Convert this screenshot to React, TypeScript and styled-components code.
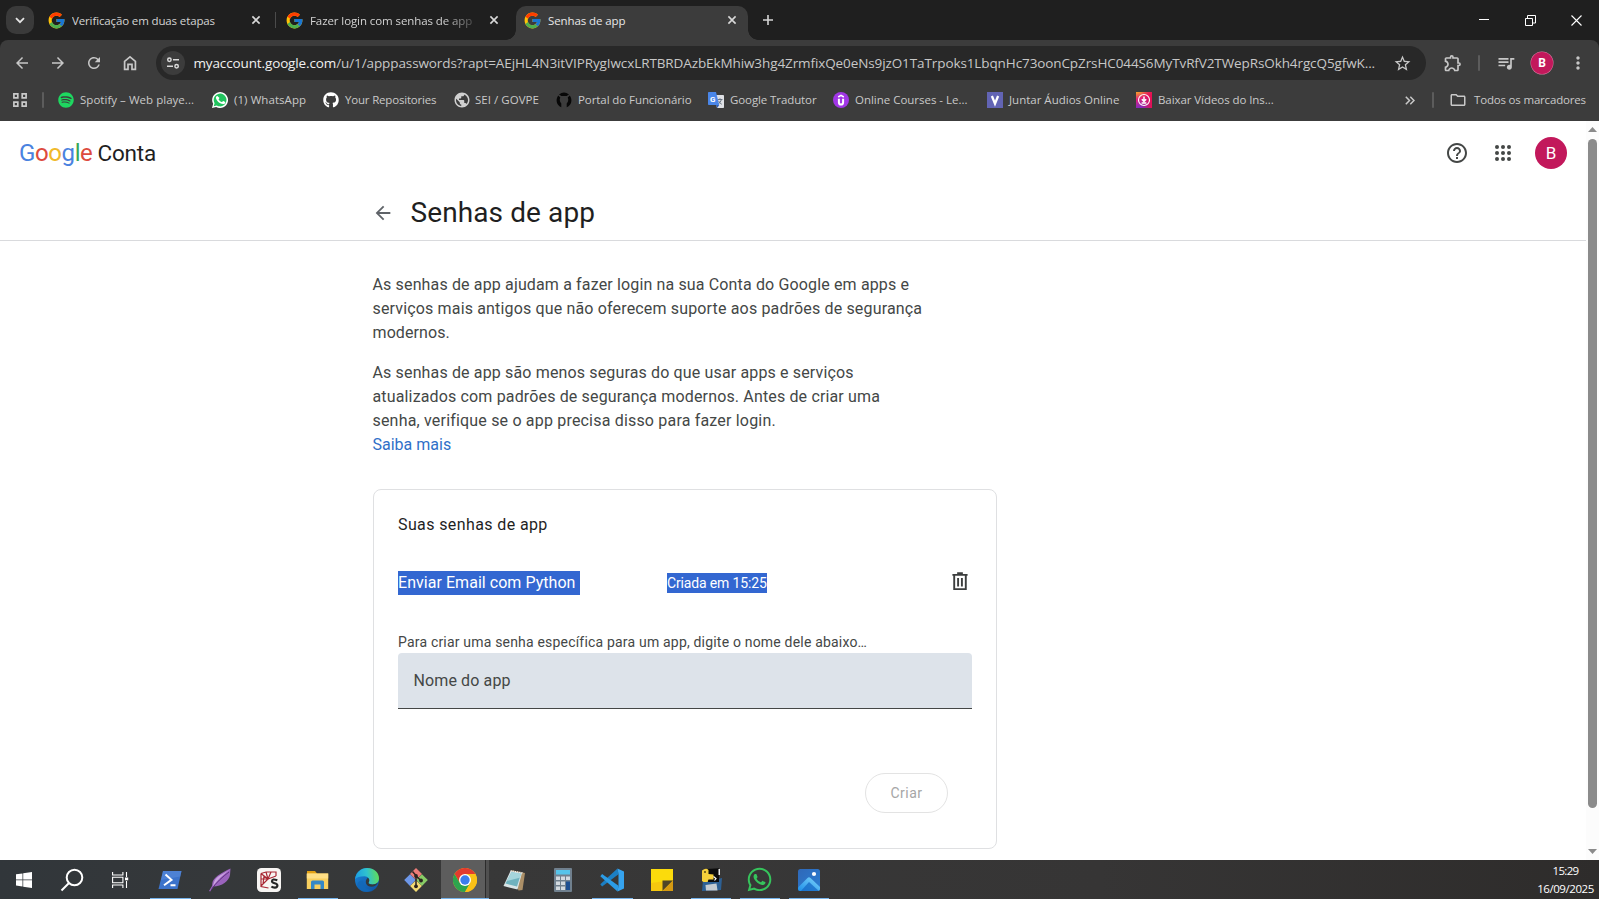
import React from "react";
import styled, { createGlobalStyle } from "styled-components";
import { FcGoogle } from "react-icons/fc";
import { FaGithub, FaSpotify, FaWhatsapp } from "react-icons/fa";
import {
  MdArrowBack,
  MdArrowForward,
  MdRefresh,
  MdStarBorder,
  MdOutlineExtension,
  MdQueueMusic,
  MdMoreVert,
  MdHelpOutline,
  MdPublic,
  MdOutlineFolder,
} from "react-icons/md";

const uiFont = `"Open Sans", "Noto Sans", sans-serif`;
const pageFont = `Roboto, "Liberation Sans", sans-serif`;

const GlobalStyle = createGlobalStyle`
  *, *::before, *::after { box-sizing: border-box; }
  body { margin: 0; background: #fff; overflow: hidden; }
  svg { display: block; flex: none; }
  p, h1, h2 { margin: 0; font-weight: 400; }
  button { border: 0; padding: 0; background: none; font: inherit; color: inherit; }
`;

const Screen = styled.div`
  width: 1599px;
  height: 899px;
  display: flex;
  flex-direction: column;
  overflow: hidden;
`;

/* ---------- tab strip ---------- */

const TabStrip = styled.header`
  height: 40px;
  flex: none;
  display: flex;
  background: #1f1f1f;
  color: #dcdcdc;
  font: 11.5px/16px ${uiFont};
`;

const TabSearch = styled.button`
  width: 28px;
  height: 28px;
  margin: 6px 5px 0 6px;
  border-radius: 10px;
  background: #3a3a3a;
  display: grid;
  place-items: center;
`;

const Tab = styled.div<{ $width: number; $pad: string; $active?: boolean }>`
  position: relative;
  flex: none;
  width: ${(p) => p.$width}px;
  height: 34px;
  margin-top: 6px;
  padding: ${(p) => p.$pad};
  display: flex;
  align-items: center;
  gap: 8px;
  border-radius: 10px 10px 0 0;
  background: ${(p) => (p.$active ? "#3c3c3c" : "transparent")};
  color: ${(p) => (p.$active ? "#e8e8e8" : "#d3d3d3")};

  &::before,
  &::after {
    content: ${(p) => (p.$active ? '""' : "none")};
    position: absolute;
    bottom: 0;
    width: 10px;
    height: 10px;
  }
  &::before {
    left: -10px;
    background: radial-gradient(circle at 0 0, transparent 9.5px, #3c3c3c 10px);
  }
  &::after {
    right: -10px;
    background: radial-gradient(circle at 100% 0, transparent 9.5px, #3c3c3c 10px);
  }
`;

const Favicon = styled(FcGoogle)`
  width: 19px;
  height: 19px;
  margin: -1.5px;
`;

const TabTitle = styled.span<{ $track: number; $fade?: boolean }>`
  flex: 1;
  white-space: nowrap;
  overflow: hidden;
  margin-right: 8px;
  padding-top: 1px;
  letter-spacing: ${(p) => p.$track}px;
  ${(p) =>
    p.$fade &&
    "mask-image: linear-gradient(to right, #000 calc(100% - 30px), transparent 106%);"}
`;

const TabDivider = styled.span`
  width: 1px;
  height: 16px;
  margin-top: 12px;
  background: #4b4b4b;
`;

const NewTab = styled.button`
  width: 28px;
  height: 40px;
  margin-left: 6px;
  display: grid;
  place-items: center;
`;

const WindowControls = styled.div`
  margin-left: auto;
  display: flex;
`;

const WindowButton = styled.button`
  width: 46px;
  height: 40px;
  display: grid;
  place-items: center;
`;

/* ---------- toolbar ---------- */

const ToolbarBack = styled.div`
  flex: none;
  background: #1f1f1f;
`;

const Toolbar = styled.div`
  height: 45px;
  display: flex;
  align-items: center;
  background: #3c3c3c;
  color: #c7c7c7;
  border-radius: 8px 8px 0 0;
  padding: 1px 0 0 4px;
`;

const ToolButton = styled.button<{ $width?: number }>`
  flex: none;
  width: ${(p) => p.$width ?? 36}px;
  height: 34px;
  display: grid;
  place-items: center;
`;

const AddressBar = styled.div`
  flex: none;
  width: 1270px;
  height: 34px;
  margin-left: 8px;
  border-radius: 17px;
  background: #282828;
  display: flex;
  align-items: center;
  padding: 0 14px 0 5px;
`;

const SiteInfo = styled.span`
  width: 24px;
  height: 24px;
  border-radius: 50%;
  background: #3c3c3c;
  display: grid;
  place-items: center;
  margin-right: 8.5px;
`;

const Url = styled.span`
  flex: 1;
  font: 13.5px/20px ${uiFont};
  letter-spacing: -0.1px;
  white-space: nowrap;
  color: #c7c7c7;
`;

const UrlHost = styled.span`
  color: #f0f0f0;
  letter-spacing: -0.13px;
`;

const Separator = styled.span<{ $gap: string }>`
  width: 2px;
  height: 16px;
  margin: ${(p) => p.$gap};
  border-radius: 1px;
  background: #5c5c5c;
`;

const ProfileBadge = styled.span`
  width: 22px;
  height: 22px;
  border-radius: 50%;
  background: #c2185b;
  color: #fff;
  box-shadow: 0 0 0 0.5px #d77ba0;
  font: 700 12px/22px ${pageFont};
  text-align: center;
`;

/* ---------- bookmarks ---------- */

const BookmarksBar = styled.nav`
  height: 36px;
  flex: none;
  display: flex;
  align-items: center;
  background: #3c3c3c;
  color: #c9c9c9;
  font: 11.5px/16px ${uiFont};
  padding: 0 13px 6px 13px;
`;

const Bookmark = styled.div<{ $width: number; $gap?: number }>`
  width: ${(p) => p.$width}px;
  display: flex;
  align-items: center;
  gap: ${(p) => p.$gap ?? 6}px;
  white-space: nowrap;
`;

const BookmarkName = styled.span<{ $track: number }>`
  letter-spacing: ${(p) => p.$track}px;
`;

const MoreBookmarks = styled.span`
  margin-left: auto;
`;

/* ---------- page ---------- */

const Viewport = styled.div`
  height: 739px;
  flex: none;
  display: flex;
  background: #fff;
  font-family: ${pageFont};
`;

const Page = styled.div`
  width: 1586px;
  display: flex;
  flex-direction: column;
  color: #444746;
`;

const PageHeader = styled.div`
  height: 64px;
  display: flex;
  align-items: center;
  padding: 0 19px 0 19px;
`;

const Brand = styled.div`
  display: flex;
  align-items: baseline;
  font-size: 22.5px;
  line-height: 28px;
  color: #1f1f1f;
  letter-spacing: -0.15px;
`;

const BrandLogo = styled.span`
  font-size: 24px;
  font-weight: 450;
  letter-spacing: -0.4px;
  margin-right: 5px;
`;

const Tint = styled.span<{ $color: string }>`
  color: ${(p) => p.$color};
`;

const HeaderActions = styled.div`
  margin-left: auto;
  display: flex;
  align-items: center;
  gap: 26px;
`;

const AccountBadge = styled.span`
  width: 32px;
  height: 32px;
  margin-left: -2px;
  border-radius: 50%;
  background: #c2185b;
  color: #fff;
  font-size: 17px;
  font-weight: 450;
  line-height: 33px;
  text-align: center;
`;

const TitleBar = styled.div`
  height: 56px;
  display: flex;
  align-items: center;
  gap: 17px;
  padding: 1px 0 0 371.5px;
  border-bottom: 1px solid #d9dadd;
`;

const Title = styled.h1`
  font-size: 28px;
  line-height: 36px;
  letter-spacing: 0.1px;
  color: #1f1f1f;
`;

const Content = styled.main`
  width: 624px;
  margin-left: 373px;
  padding-top: 32px;
`;

const Paragraph = styled.p`
  margin: 0 0 16px -0.5px;
  font-size: 16px;
  line-height: 24px;
`;

const Line = styled.span<{ $track: number }>`
  display: block;
  white-space: nowrap;
  letter-spacing: ${(p) => p.$track}px;
`;

const LearnMore = styled.a`
  display: block;
  color: #2f70c8;
`;

const Card = styled.section`
  height: 360px;
  margin-top: 32px;
  border: 1px solid #dfe0e2;
  border-radius: 8px;
  padding: 23px 24px 0 24px;
  display: flex;
  flex-direction: column;
`;

const CardTitle = styled.h2`
  font-size: 16px;
  line-height: 24px;
  font-weight: 450;
  letter-spacing: 0.39px;
  color: #1f1f1f;
`;

const PasswordRow = styled.div`
  height: 24px;
  margin-top: 34px;
  display: grid;
  grid-template-columns: 269px 1fr 21px;
  align-items: center;
`;

const SelectedName = styled.span`
  justify-self: start;
  width: 182px;
  background: #3367d1;
  color: #fff;
  font-size: 16px;
  line-height: 24px;
  letter-spacing: 0.04px;
`;

const SelectedDate = styled.span`
  justify-self: start;
  width: 100px;
  background: #3367d1;
  color: #fff;
  font-size: 14px;
  font-weight: 450;
  line-height: 20px;
  letter-spacing: -0.15px;
  white-space: nowrap;
`;

const Hint = styled.p`
  margin-top: 37px;
  font-size: 14px;
  line-height: 20px;
  letter-spacing: 0.19px;
`;

const Field = styled.div`
  height: 56px;
  margin-top: 1px;
  padding: 0 15.5px;
  border-radius: 4px 4px 0 0;
  border-bottom: 1px solid #444746;
  background: #dde3ea;
  font-size: 16px;
  line-height: 55px;
  letter-spacing: 0.12px;
`;

const CreateButton = styled.button`
  align-self: flex-end;
  width: 83px;
  height: 40px;
  margin: 64px 24px 0 0;
  border: 1px solid #e3e3e3;
  border-radius: 20px;
  color: #a6a6a6;
  font-size: 14px;
  letter-spacing: 0.5px;
`;

const Scrollbar = styled.div`
  width: 13px;
  display: flex;
  flex-direction: column;
  align-items: center;
  justify-content: space-between;
  background: #fcfcfc;
  padding: 6px 0;
`;

const Thumb = styled.div`
  width: 9px;
  height: 669px;
  margin: 7px 0 auto;
  border-radius: 5px;
  background: #8b8b8b;
`;

/* ---------- taskbar ---------- */

const Taskbar = styled.footer`
  height: 39px;
  flex: none;
  display: flex;
  background: linear-gradient(to right, #31363a, #35383a 220px, #383838 480px, #363535 1100px, #2e2c2b);
`;

const TaskButton = styled.div<{ $width: number; $open?: boolean; $current?: boolean }>`
  width: ${(p) => p.$width}px;
  height: 39px;
  display: grid;
  place-items: center;
  position: relative;
  background: ${(p) =>
    p.$current ? "linear-gradient(to right, #5d5d5d 44px, #2c2c2c 44px 45px, #505050 45px)" : "none"};

  &::after {
    content: ${(p) => (p.$open || p.$current ? '""' : "none")};
    position: absolute;
    left: ${(p) => (p.$current ? 0 : 5)}px;
    right: ${(p) => (p.$current ? 0 : 4)}px;
    bottom: 0;
    height: 1px;
    background: #76b4ec;
  }
`;

const Clock = styled.div`
  margin-left: auto;
  padding: 2px 3px 0 0;
  width: 64px;
  color: #fff;
  font: 11.5px/18px ${uiFont};
  letter-spacing: -0.45px;
  text-align: center;
`;

const ClockTime = styled.div`
  letter-spacing: -0.7px;
`;

/* ---------- small icons ---------- */

const Cross = () => (
  <svg width="10" height="10" viewBox="0 0 10 10" stroke="#d8d8d8" strokeWidth="1.6">
    <path d="M1.4 1.400l7.200 7.200M8.600 1.400L1.400 8.600" />
  </svg>
);

const Home = () => (
  <svg width="16" height="16" viewBox="0 0 16 16" fill="none" stroke="#c7c7c7" strokeWidth="1.7">
    <path d="M2.6 6.3L8 1.9l5.4 4.4v8H10V9.4H6v4.9H2.6z" />
  </svg>
);

const Tune = () => (
  <svg width="14" height="14" viewBox="0 0 14 14" fill="none" stroke="#dadada" strokeWidth="1.5">
    <circle cx="3.4" cy="3.8" r="1.7" />
    <path d="M7 3.8h6M1 10.2h6" />
    <circle cx="10.6" cy="10.2" r="1.7" />
  </svg>
);

const Extension = styled(MdOutlineExtension)`
  width: 20px;
  height: 20px;
`;

const AppsGrid = () => (
  <svg width="14" height="14" viewBox="0 0 14 14" fill="none" stroke="#c9c9c9" strokeWidth="1.7">
    <path d="M.9.9h3.9v3.9H.9zM9.2.9h3.9v3.9H9.2zM.9 9.2h3.9v3.9H.9zM9.2 9.2h3.9v3.9H9.2z" />
  </svg>
);

const WhatsAppMark = () => (
  <svg width="16" height="16" viewBox="0 0 24 24">
    <path fill="#fff" d="M0 24l1.7-6.2A11.9 11.9 0 1 1 6.2 22.4z" />
    <path fill="#22c35e" d="M2.6 21.4l1.3-4.5A9.6 9.6 0 1 1 7.2 20.2z" />
    <path
      fill="#fff"
      d="M8.8 6.7c-.3-.7-.6-.6-.9-.6-1 0-2 1.2-2 2.7 0 1.7 1.2 3.3 1.5 3.6.2.2 2.5 3.7 5.9 5 2.9 1.1 3.5.8 4.1.7.7-.1 2-.8 2.3-1.6.2-.8.2-1.4.1-1.6-.1-.2-.3-.2-.6-.4l-2.2-1c-.3-.1-.5-.2-.8.2l-1 1.2c-.2.2-.4.3-.7.1-.3-.2-1.4-.5-2.7-1.6-1-.9-1.7-2-1.900-2.300-.2-.4 0-.5.2-.7l.9-1.1c0-.2.1-.4 0-.6z"
    />
  </svg>
);

const PortalMark = () => (
  <svg width="16" height="16" viewBox="0 0 16 16" fill="#070707">
    <path d="M3 2.500Q8-1.300 13 2.500L10.600 4H5.400z" />
    <path d="M2.300 3.600A7.500 7.500 0 0 0 5.300 15.300V11.600Q2.800 8.600 4.300 5.600z" />
    <path d="M13.700 3.600A7.500 7.500 0 0 1 10.700 15.300V11.600Q13.200 8.600 11.700 5.600z" />
  </svg>
);

const GlyphText = styled.text`
  font-family: ${pageFont};
  font-weight: 700;
  text-anchor: middle;
`;

const TranslateMark = () => (
  <svg width="16" height="16" viewBox="0 0 16 16">
    <path fill="#dfe1e5" d="M6 3h9.200a.8.8 0 0 1 .8.800V15.200a.8.8 0 0 1-.8.800H9z" />
    <path stroke="#5d6a78" strokeWidth=".9" fill="none" d="M9.500 7.500h5M12 6.300v1.200M13.500 7.500q-.8 3-3.600 4.800M10.500 8.800q1 2.200 3.300 3.500" />
    <path fill="#4a86e8" d="M.8 0H8l3.200 13H.8A.8.8 0 0 1 0 12.200V.8A.8.8 0 0 1 .8 0z" />
    <path fill="#2d5fb8" d="M8 13h3.200L9.200 16z" />
    <GlyphText x="4.800" y="9.500" fontSize="8" fill="#fff">G</GlyphText>
  </svg>
);

const UdemyMark = () => (
  <svg width="16" height="16" viewBox="0 0 16 16" fill="none" stroke="#fff">
    <circle cx="8" cy="8" r="8" fill="#a136e6" stroke="none" />
    <path strokeWidth="1.500" d="M5.200 5l2.800-1.700L10.800 5" />
    <path strokeWidth="2" d="M5.900 6.800v3.600q0 2.100 2.100 2.100t2.100-2.100V6.800" />
  </svg>
);

const VMark = () => (
  <svg width="16" height="16" viewBox="0 0 16 16">
    <path fill="#6264b4" d="M0 0h16v16H0z" />
    <path fill="none" stroke="#fff" strokeWidth="2.300" d="M4.900 4l3.100 7.600L11.100 4" />
  </svg>
);

const DownloaderMark = () => (
  <svg width="16" height="16" viewBox="0 0 16 16">
    <defs>
      <linearGradient id="insta" x1="0" y1="0" x2="0.300" y2="1">
        <stop offset="0" stopColor="#f7a824" />
        <stop offset=".45" stopColor="#e0207c" />
        <stop offset="1" stopColor="#7a2cc4" />
      </linearGradient>
      <linearGradient id="instaRed" x1="0" y1="0" x2="1" y2="0">
        <stop offset=".3" stopColor="#e60f50" stopOpacity="0" />
        <stop offset="1" stopColor="#e60f50" />
      </linearGradient>
    </defs>
    <path fill="url(#insta)" d="M0 0h16v16H0z" />
    <path fill="url(#instaRed)" d="M0 0h16v16H0z" />
    <circle cx="8" cy="8" r="5.500" fill="none" stroke="#fff" strokeWidth="1.100" />
    <path fill="none" stroke="#fff" strokeWidth="1.500" d="M8 4.500v4.600M5.800 7.200L8 9.400l2.200-2.200M5.600 10.900h4.800" />
  </svg>
);

const AppsDots = () => (
  <svg width="16" height="16" viewBox="0 0 16 16" fill="#444746">
    {[2, 8, 14].map((y) => [2, 8, 14].map((x) => <circle key={`${x}-${y}`} cx={x} cy={y} r="2" />))}
  </svg>
);

const TrashIcon = styled.svg`
  margin-bottom: 3px;
`;

const Trash = () => (
  <TrashIcon width="18" height="19" viewBox="0 0 18 20" fill="none" stroke="#3c3e3e" strokeWidth="2">
    <path d="M1 3h16M6 1.200h6M2.900 3v15h12.200V3M7 6.200v9M11 6.200v9" />
  </TrashIcon>
);

/* ---------- taskbar icons ---------- */

const Windows = () => (
  <svg width="16" height="16" viewBox="0 0 16 16" fill="#fff">
    <path d="M0 2.300l6.500-.9v6.200H0zM7.200 1.300L16 0v7.600H7.200zM0 8.300h6.500v6.200L0 13.600zM7.200 8.300H16V16l-8.800-1.300z" />
  </svg>
);

const SearchGlass = () => (
  <svg width="24" height="24" viewBox="0 0 24 24" fill="none" stroke="#fff" strokeWidth="2">
    <circle cx="14.500" cy="9.500" r="7.800" />
    <path d="M9 15l-7.500 7.500" />
  </svg>
);

const TaskView = () => (
  <svg width="17" height="16" viewBox="0 0 17 16" fill="none" stroke="#fff" strokeWidth="1.100">
    <path d="M.6 0v3h10.300V0M.6 16v-3h10.300v3M.6 5.200h10.300v5.600H.6zM14.500 0v5M14.500 9v7" />
    <path fill="#fff" stroke="none" d="M13 5.500h3.200v2.800H13z" />
  </svg>
);

const PowerShell = () => (
  <svg width="24" height="20" viewBox="0 0 24 20">
    <path fill="#3c73cb" d="M5 1h18.500L19.500 19H.5z" />
    <path fill="#5e8fdd" d="M5 1h18.500l-1.200 5.500L3 10z" opacity=".5" />
    <path fill="none" stroke="#fff" strokeWidth="2" d="M7.500 4.500l6 5.300L6 15.200M12.500 15.200h5" />
  </svg>
);

const Feather = () => (
  <svg width="24" height="24" viewBox="0 0 24 24">
    <path fill="#9a63bd" d="M22.500.5C15 4 7.500 8 4.800 13.200c-.6 1.500-.4 3.200-.8 4.800L1 23l1.200.4 3-4.800C14 18.500 21 13 22 7z" />
    <path fill="#caa2e0" d="M22 1.500C15 7 9.500 12 5 18.300c1-4 1-7 6-10.300z" />
    <path stroke="#5d2d80" strokeWidth=".9" fill="none" d="M21 4C14.500 9 8.500 14 3.500 21.500" />
  </svg>
);

const SchemaApp = () => (
  <svg width="24" height="24" viewBox="0 0 24 24">
    <rect width="24" height="24" rx="4.500" fill="#f7f5f3" />
    <path fill="none" stroke="#a92834" strokeWidth="1.200" d="M4 5.500l5-1.500h10v4M4 5.500v13L11.500 20M9 4l2 7-7 7M4 11h7l8-3M4 5.500L11 11l3-7M7 8l-1 8" />
    <path fill="none" stroke="#262626" strokeWidth="2.200" d="M20.300 12.300q-5.300-2-5.300.9c0 2.700 5.400 1.500 5.400 4.300 0 2.900-4.600 2.200-6 1" />
  </svg>
);

const Explorer = () => (
  <svg width="23" height="20" viewBox="0 0 23 20">
    <path fill="#e2a014" d="M1 1h8l2 2.500V8H1z" />
    <path fill="#f8cf5f" d="M.8 3.500h21.400V19H.8z" />
    <path fill="#ffdf86" d="M.8 3.500h21.400v5H.8z" />
    <path fill="#3488c7" d="M5 12q0-1.500 1.500-1.500h10Q18 10.500 18 12v7h-3.500v-4.500h-6V19H5z" />
  </svg>
);

const Edge = () => (
  <svg width="24" height="24" viewBox="0 0 24 24">
    <defs>
      <linearGradient id="edgeTop" x1="0" y1=".5" x2="1" y2=".4">
        <stop offset="0" stopColor="#1b9de2" />
        <stop offset=".5" stopColor="#2fc2cf" />
        <stop offset="1" stopColor="#62dc54" />
      </linearGradient>
      <linearGradient id="edgeLow" x1="0" y1="0" x2="1" y2="1">
        <stop offset="0" stopColor="#1a86da" />
        <stop offset="1" stopColor="#0f4f9e" />
      </linearGradient>
    </defs>
    <circle cx="12" cy="12" r="12" fill="url(#edgeLow)" />
    <path fill="url(#edgeTop)" d="M.1 11.200C.8 4.700 5.800 0 12.200 0 19 0 24 4.800 24 10.300c0 4.100-3 6.200-6.200 6.200-3.500 0-4.600-1.300-4.200-2 1.600-2.300.6-6.300-4.300-6.300C5 8.200 1.400 9.300.1 11.200z" />
    <path fill="#1268b8" d="M8.500 12.500c-1 5 2.500 9.500 8.600 9.300-4.500 3.200-11.300 2.300-14.300-2.300C1.300 15.700 3.600 12 8.500 12.500z" opacity=".8" />
    <path fill="#35393b" d="M12.800 9.800c1.800 1.200 1.900 3.200.8 4.700-.5.800.8 2 4.200 2 2 0 3.800-.7 5-2-1.300 3.200-3.600 4.300-6.300 4.300-5 0-7.800-5-3.700-9z" />
  </svg>
);

const Git = () => (
  <svg width="24" height="24" viewBox="0 0 24 24">
    <path fill="#ec7c78" d="M12 0l6 6-6 6-6-6z" />
    <path fill="#6d97e8" d="M6 6.300l5.800 5.800L6 17.900.2 12.100z" />
    <path fill="#88cc66" d="M18 6.300l5.800 5.800-5.800 5.800-5.800-5.800z" />
    <path fill="#f3db72" d="M12 12.300l5.900 5.800L12 24l-5.900-5.900z" />
    <path stroke="#2b2420" strokeWidth="1.500" fill="none" d="M8.500 3.500l3.500 4v11M12 8l5 4.500" />
    <circle cx="12" cy="8" r="1.900" fill="#2b2420" />
    <circle cx="17" cy="12.500" r="1.900" fill="#2b2420" />
    <circle cx="12" cy="18.300" r="1.900" fill="#2b2420" />
  </svg>
);

const Chrome = () => (
  <svg width="24" height="24" viewBox="0 0 24 24">
    <circle cx="12" cy="12" r="12" fill="#fbc116" />
    <path fill="#e33b2e" d="M1.600 6A12 12 0 0 1 22.400 6H12L6.800 15z" />
    <path fill="#2da44e" d="M1.600 6A12 12 0 0 0 12 24l5.200-9L12 17.500 6.800 15z" />
    <path fill="#fbc116" d="M22.400 6A12 12 0 0 1 12 24l5.200-9V6z" />
    <circle cx="12" cy="12" r="6" fill="#fff" />
    <circle cx="12" cy="12" r="4.700" fill="#3b7ded" />
  </svg>
);

const Notepad = () => (
  <svg width="24" height="24" viewBox="0 0 24 24">
    <path fill="#ab8f67" d="M9 2l14 3-2.500 17-4 .5z" />
    <path fill="#d9e4e6" d="M8.500 3L20 5l-4.500 16.500L1.500 18z" />
    <path fill="#6fb2be" d="M9.500 4l9.500 1.800L15 18.500 3.500 15.500z" />
    <path fill="#b7e0e6" d="M9.500 4l9.500 1.800-1.200 4L5 13z" opacity=".75" />
    <path stroke="#eee" strokeWidth="1.300" strokeDasharray="1.200 1" d="M8.500 2.800l13 2.200" />
  </svg>
);

const Calculator = () => (
  <svg width="18" height="24" viewBox="0 0 18 24">
    <rect width="18" height="24" rx="1" fill="#70808e" />
    <path fill="#56c4ea" d="M2 2h14v4.500H2z" />
    <path fill="#d3dae0" d="M2 8.500h4V12H2zM7 8.500h4V12H7zM12 8.500h4V12h-4zM2 13.500h4V17H2zM7 13.500h4V17H7zM2 18.500h4V22H2zM7 18.500h4V22H7z" />
    <path fill="#1d4f91" d="M12 13.500h4V22h-4z" />
  </svg>
);

const Code = () => (
  <svg width="24" height="24" viewBox="0 0 24 24">
    <path fill="#1b7fc4" d="M17.500.5L.3 16.200l1.800 2.200L18.500 6.200z" />
    <path fill="#2b9ce6" d="M17.500 23.500L.3 8.200l1.800-2.300L18.500 17.700z" />
    <path fill="#36a3ee" d="M17.500.5L24 3.500v17l-6.500 3 1-5.800V6.200z" />
  </svg>
);

const StickyNotes = () => (
  <svg width="22" height="22" viewBox="0 0 22 22">
    <path fill="#fbdb0c" d="M0 0h22v22H0z" />
    <path fill="#f0ad13" d="M0 14L22 11v11H0z" opacity=".4" />
    <path fill="#4f4527" d="M11.500 11.500H22L11.500 22z" />
    <path fill="#d59a12" d="M22 11.500V22H11.500z" />
  </svg>
);

const PythonTerminal = () => (
  <svg width="24" height="24" viewBox="0 0 24 24">
    <path fill="#2d6094" d="M10 13l13-3-1 12-19 1 1-11z" />
    <path fill="#c5ccd2" d="M6.500 17l11-1.500 1 7H7z" />
    <path fill="#0c0c0c" d="M8 1l12-.7V14H9z" />
    <path fill="#e9e9e9" d="M19.500 1h1.500v6h-1.500z" />
    <path fill="#f7d13b" d="M3 2.500Q7-.5 9.500 2v4l5 .5v5H9.500l-1 2.500H4.500L3 13z" />
    <circle cx="6" cy="4" r=".9" fill="#4b3d10" />
    <path fill="none" stroke="#fff" strokeWidth="1.200" d="M14.500 8.500l2.500 2-1.500 2" />
  </svg>
);

const Photos = () => (
  <svg width="22" height="22" viewBox="0 0 22 22">
    <defs>
      <linearGradient id="photoSky" x1="0" y1="0" x2="1" y2="1">
        <stop offset="0" stopColor="#2f68b8" />
        <stop offset="1" stopColor="#2a7fd4" />
      </linearGradient>
      <linearGradient id="photoHill" x1="0" y1="1" x2="1" y2="0">
        <stop offset="0" stopColor="#1d8ee8" />
        <stop offset="1" stopColor="#7fd6fb" />
      </linearGradient>
      <clipPath id="photoClip">
        <rect width="22" height="22" rx="2.500" />
      </clipPath>
    </defs>
    <g clipPath="url(#photoClip)">
      <path fill="url(#photoSky)" d="M0 0h22v22H0z" />
      <path fill="url(#photoHill)" d="M0 18.500L9.500 9q1.500-1.300 3 0L22 18v4H0z" />
      <path fill="#1568c4" d="M11 13l11 10H2z" opacity=".75" />
      <circle cx="16" cy="5" r="2.100" fill="#fff" />
    </g>
  </svg>
);

const bookmarks = [
  { name: "Spotify – Web playe...", track: 0.03, width: 154.5, gap: 6.5, icon: <FaSpotify size={16} color="#1ed760" /> },
  { name: "(1) WhatsApp", track: 0.07, width: 111, icon: <WhatsAppMark /> },
  { name: "Your Repositories", track: -0.19, width: 130, icon: <FaGithub size={16} color="#fff" /> },
  { name: "SEI / GOVPE", track: 0.04, width: 103, icon: <MdPublic size={18} color="#d0d0d0" />, gap: 4 },
  { name: "Portal do Funcionário", track: -0.08, width: 152, icon: <PortalMark /> },
  { name: "Google Tradutor", track: -0.1, width: 125, icon: <TranslateMark /> },
  { name: "Online Courses - Le...", track: -0.02, width: 154, icon: <UdemyMark /> },
  { name: "Juntar Áudios Online", track: 0, width: 149, icon: <VMark /> },
  { name: "Baixar Vídeos do Ins...", track: -0.07, width: 150, icon: <DownloaderMark /> },
];

const tasks = [
  { width: 48, icon: <Windows /> },
  { width: 48, icon: <SearchGlass /> },
  { width: 49, icon: <TaskView /> },
  { width: 50, icon: <PowerShell />, open: true },
  { width: 49, icon: <Feather /> },
  { width: 49, icon: <SchemaApp /> },
  { width: 49, icon: <Explorer />, open: true },
  { width: 49, icon: <Edge /> },
  { width: 50, icon: <Git /> },
  { width: 48, icon: <Chrome />, current: true },
  { width: 49, icon: <Notepad /> },
  { width: 49, icon: <Calculator /> },
  { width: 50, icon: <Code />, open: true },
  { width: 49, icon: <StickyNotes /> },
  { width: 49, icon: <PythonTerminal />, open: true },
  { width: 49, icon: <FaWhatsapp size={27} color="#36c45c" />, open: true },
  { width: 49, icon: <Photos />, open: true },
];

export default function App() {
  return (
    <Screen>
      <GlobalStyle />
      <TabStrip>
        <TabSearch>
          <svg width="10" height="7" viewBox="0 0 10 7" fill="none" stroke="#e4e4e4" strokeWidth="1.800">
            <path d="M1 1.200l4 4 4-4" />
          </svg>
        </TabSearch>
        <Tab $width={236} $pad="0 14px 6px 9px">
          <Favicon />
          <TabTitle $track={-0.13}>Verificação em duas etapas</TabTitle>
          <Cross />
        </Tab>
        <TabDivider />
        <Tab $width={239.5} $pad="0 16.5px 6px 10px">
          <Favicon />
          <TabTitle $track={-0.09} $fade>Fazer login com senhas de app</TabTitle>
          <Cross />
        </Tab>
        <Tab $width={232.5} $pad="0 11px 6px 8.5px" $active>
          <Favicon />
          <TabTitle $track={-0.1}>Senhas de app</TabTitle>
          <Cross />
        </Tab>
        <NewTab>
          <svg width="10" height="10" viewBox="0 0 10 10" stroke="#d5d5d5" strokeWidth="1.600">
            <path d="M5 0v10M0 5h10" />
          </svg>
        </NewTab>
        <WindowControls>
          <WindowButton>
            <svg width="10" height="10" viewBox="0 0 10 10" stroke="#fff">
              <path d="M0 4.500h10" />
            </svg>
          </WindowButton>
          <WindowButton>
            <svg width="11" height="11" viewBox="0 0 11 11" fill="none" stroke="#fff">
              <path d="M.5 3.500h7v7h-7zM2.500 3V.5h8v7.500H8" />
            </svg>
          </WindowButton>
          <WindowButton>
            <svg width="11" height="11" viewBox="0 0 11 11" stroke="#fff" strokeWidth="1.100">
              <path d="M.5.5l10 10M10.500.500l-10 10" />
            </svg>
          </WindowButton>
        </WindowControls>
      </TabStrip>

      <ToolbarBack>
        <Toolbar>
          <ToolButton><MdArrowBack size={18} /></ToolButton>
          <ToolButton><MdArrowForward size={18} /></ToolButton>
          <ToolButton><MdRefresh size={18} /></ToolButton>
          <ToolButton><Home /></ToolButton>
          <AddressBar>
            <SiteInfo><Tune /></SiteInfo>
            <Url>
              <UrlHost>myaccount.google.com</UrlHost>
              /u/1/apppasswords?rapt=AEjHL4N3itVIPRygIwcxLRTBRDAzbEkMhiw3hg4ZrmfixQe0eNs9jzO1TaTrpoks1LbqnHc73oonCpZrsHC044S6MyTvRfV2TWepRsOkh4rgcQ5gfwK...
            </Url>
            <MdStarBorder size={19} />
          </AddressBar>
          <ToolButton $width={54}><Extension /></ToolButton>
          <Separator $gap="0 8px 0 -2px" />
          <ToolButton><MdQueueMusic size={20} /></ToolButton>
          <ToolButton><ProfileBadge>B</ProfileBadge></ToolButton>
          <ToolButton><MdMoreVert size={20} /></ToolButton>
        </Toolbar>
      </ToolbarBack>

      <BookmarksBar>
        <AppsGrid />
        <Separator $gap="0 13.500px 0 15px" />
        {bookmarks.map((b) => (
          <Bookmark key={b.name} $width={b.width} $gap={b.gap}>
            {b.icon}
            <BookmarkName $track={b.track}>{b.name}</BookmarkName>
          </Bookmark>
        ))}
        <MoreBookmarks>
          <svg width="10" height="9" viewBox="0 0 10 9" fill="none" stroke="#c9c9c9" strokeWidth="1.500">
            <path d="M.8.7l3.700 3.800L.8 8.300M5.300.7L9 4.500 5.300 8.300" />
          </svg>
        </MoreBookmarks>
        <Separator $gap="0 15px 0 17px" />
        <Bookmark $width={137} $gap={7}>
          <MdOutlineFolder size={18} />
          <BookmarkName $track={-0.183}>Todos os marcadores</BookmarkName>
        </Bookmark>
      </BookmarksBar>

      <Viewport>
        <Page>
          <PageHeader>
            <Brand>
              <BrandLogo>
                <Tint $color="#4a82e0">G</Tint>
                <Tint $color="#dd4b3e">o</Tint>
                <Tint $color="#f0b92a">o</Tint>
                <Tint $color="#4a82e0">g</Tint>
                <Tint $color="#3aa757">l</Tint>
                <Tint $color="#dd4b3e">e</Tint>
              </BrandLogo>
              Conta
            </Brand>
            <HeaderActions>
              <MdHelpOutline size={24} color="#444746" />
              <AppsDots />
              <AccountBadge>B</AccountBadge>
            </HeaderActions>
          </PageHeader>
          <TitleBar>
            <MdArrowBack size={22} color="#5f6368" />
            <Title>Senhas de app</Title>
          </TitleBar>
          <Content>
            <Paragraph>
              <Line $track={0.145}>As senhas de app ajudam a fazer login na sua Conta do Google em apps e</Line>
              <Line $track={0.158}>serviços mais antigos que não oferecem suporte aos padrões de segurança</Line>
              <Line $track={0.1}>modernos.</Line>
            </Paragraph>
            <Paragraph>
              <Line $track={0.145}>As senhas de app são menos seguras do que usar apps e serviços</Line>
              <Line $track={0.15}>atualizados com padrões de segurança modernos. Antes de criar uma</Line>
              <Line $track={0.186}>senha, verifique se o app precisa disso para fazer login.</Line>
              <LearnMore>Saiba mais</LearnMore>
            </Paragraph>
            <Card>
              <CardTitle>Suas senhas de app</CardTitle>
              <PasswordRow>
                <SelectedName>Enviar Email com Python</SelectedName>
                <SelectedDate>Criada em 15:25</SelectedDate>
                <Trash />
              </PasswordRow>
              <Hint>Para criar uma senha específica para um app, digite o nome dele abaixo…</Hint>
              <Field>Nome do app</Field>
              <CreateButton>Criar</CreateButton>
            </Card>
          </Content>
        </Page>
        <Scrollbar>
          <svg width="9" height="5" viewBox="0 0 9 5" fill="#8b8b8b"><path d="M4.500 0L9 5H0z" /></svg>
          <Thumb />
          <svg width="9" height="5" viewBox="0 0 9 5" fill="#8b8b8b"><path d="M4.500 5L9 0H0z" /></svg>
        </Scrollbar>
      </Viewport>

      <Taskbar>
        {tasks.map((t, i) => (
          <TaskButton key={i} $width={t.width} $open={t.open} $current={t.current}>
            {t.icon}
          </TaskButton>
        ))}
        <Clock>
          <ClockTime>15:29</ClockTime>
          <div>16/09/2025</div>
        </Clock>
      </Taskbar>
    </Screen>
  );
}
